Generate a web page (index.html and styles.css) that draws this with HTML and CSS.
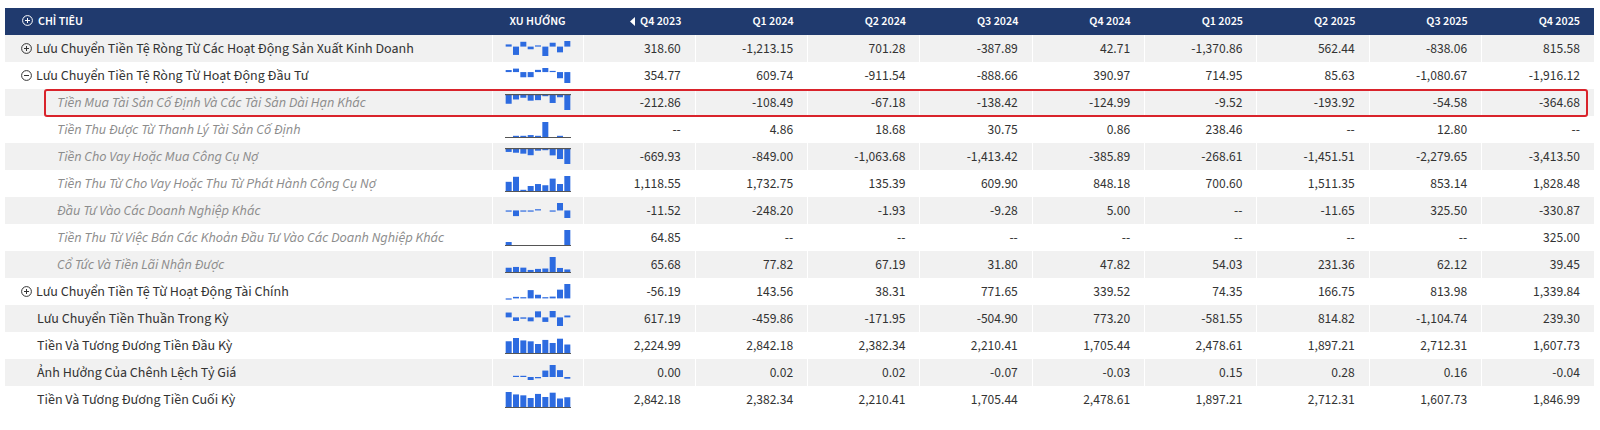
FILE: index.html
```html
<!DOCTYPE html>
<html lang="vi">
<head>
<meta charset="utf-8">
<title>Lưu chuyển tiền tệ</title>
<link rel="stylesheet" href="styles.css">
</head>
<body>
<div class="wrap">
<table class="fin">
  <colgroup>
    <col class="c-name"><col class="c-trend">
    <col class="c-num"><col class="c-num"><col class="c-num"><col class="c-num"><col class="c-num"><col class="c-num"><col class="c-num"><col class="c-num"><col class="c-num">
  </colgroup>
  <thead>
    <tr>
      <th class="h-name"><svg class="ic" width="11" height="11" viewBox="0 0 11 11"><circle cx="5.5" cy="5.5" r="4.9" fill="none" stroke="currentColor" stroke-width="1"/><path d="M3 5.5h5M5.5 3v5" stroke="currentColor" stroke-width="1"/></svg>CHỈ TIÊU</th>
      <th class="h-trend">XU HƯỚNG</th>
      <th><svg class="arrow" width="5" height="9" viewBox="0 0 5 9"><path d="M5 0v9L0 4.5z" fill="currentColor"/></svg>Q4 2023</th>
      <th>Q1 2024</th><th>Q2 2024</th><th>Q3 2024</th><th>Q4 2024</th>
      <th>Q1 2025</th><th>Q2 2025</th><th>Q3 2025</th><th>Q4 2025</th>
    </tr>
  </thead>
  <tbody>
    <tr>
      <td class="name"><svg class="ic" width="11" height="11" viewBox="0 0 11 11"><circle cx="5.5" cy="5.5" r="4.9" fill="none" stroke="currentColor" stroke-width="1"/><path d="M3 5.5h5M5.5 3v5" stroke="currentColor" stroke-width="1"/></svg>Lưu Chuyển Tiền Tệ Ròng Từ Các Hoạt Động Sản Xuất Kinh Doanh</td>
      <td class="spark" data-v="318.60 -1213.15 701.28 -387.89 42.71 -1370.86 562.44 -838.06 815.58"></td>
      <td>318.60</td><td>-1,213.15</td><td>701.28</td><td>-387.89</td><td>42.71</td><td>-1,370.86</td><td>562.44</td><td>-838.06</td><td>815.58</td>
    </tr>
    <tr>
      <td class="name"><svg class="ic" width="11" height="11" viewBox="0 0 11 11"><circle cx="5.5" cy="5.5" r="4.9" fill="none" stroke="currentColor" stroke-width="1"/><path d="M3 5.5h5" stroke="currentColor" stroke-width="1"/></svg>Lưu Chuyển Tiền Tệ Ròng Từ Hoạt Động Đầu Tư</td>
      <td class="spark" data-v="354.77 609.74 -911.54 -888.66 390.97 714.95 85.63 -1080.67 -1916.12"></td>
      <td>354.77</td><td>609.74</td><td>-911.54</td><td>-888.66</td><td>390.97</td><td>714.95</td><td>85.63</td><td>-1,080.67</td><td>-1,916.12</td>
    </tr>
    <tr>
      <td class="name child"><span class="highlight"></span>Tiền Mua Tài Sản Cố Định Và Các Tài Sản Dài Hạn Khác</td>
      <td class="spark" data-v="-212.86 -108.49 -67.18 -138.42 -124.99 -9.52 -193.92 -54.58 -364.68"></td>
      <td>-212.86</td><td>-108.49</td><td>-67.18</td><td>-138.42</td><td>-124.99</td><td>-9.52</td><td>-193.92</td><td>-54.58</td><td>-364.68</td>
    </tr>
    <tr>
      <td class="name child">Tiền Thu Được Từ Thanh Lý Tài Sản Cố Định</td>
      <td class="spark" data-v="- 4.86 18.68 30.75 0.86 238.46 - 12.80 -"></td>
      <td>--</td><td>4.86</td><td>18.68</td><td>30.75</td><td>0.86</td><td>238.46</td><td>--</td><td>12.80</td><td>--</td>
    </tr>
    <tr>
      <td class="name child">Tiền Cho Vay Hoặc Mua Công Cụ Nợ</td>
      <td class="spark" data-v="-669.93 -849.00 -1063.68 -1413.42 -385.89 -268.61 -1451.51 -2279.65 -3413.50"></td>
      <td>-669.93</td><td>-849.00</td><td>-1,063.68</td><td>-1,413.42</td><td>-385.89</td><td>-268.61</td><td>-1,451.51</td><td>-2,279.65</td><td>-3,413.50</td>
    </tr>
    <tr>
      <td class="name child">Tiền Thu Từ Cho Vay Hoặc Thu Từ Phát Hành Công Cụ Nợ</td>
      <td class="spark" data-v="1118.55 1732.75 135.39 609.90 848.18 700.60 1511.35 853.14 1828.48"></td>
      <td>1,118.55</td><td>1,732.75</td><td>135.39</td><td>609.90</td><td>848.18</td><td>700.60</td><td>1,511.35</td><td>853.14</td><td>1,828.48</td>
    </tr>
    <tr>
      <td class="name child">Đầu Tư Vào Các Doanh Nghiệp Khác</td>
      <td class="spark" data-v="-11.52 -248.20 -1.93 -9.28 5.00 - -11.65 325.50 -330.87"></td>
      <td>-11.52</td><td>-248.20</td><td>-1.93</td><td>-9.28</td><td>5.00</td><td>--</td><td>-11.65</td><td>325.50</td><td>-330.87</td>
    </tr>
    <tr>
      <td class="name child">Tiền Thu Từ Việc Bán Các Khoản Đầu Tư Vào Các Doanh Nghiệp Khác</td>
      <td class="spark" data-v="64.85 - - - - - - - 325.00"></td>
      <td>64.85</td><td>--</td><td>--</td><td>--</td><td>--</td><td>--</td><td>--</td><td>--</td><td>325.00</td>
    </tr>
    <tr>
      <td class="name child">Cổ Tức Và Tiền Lãi Nhận Được</td>
      <td class="spark" data-v="65.68 77.82 67.19 31.80 47.82 54.03 231.36 62.12 39.45"></td>
      <td>65.68</td><td>77.82</td><td>67.19</td><td>31.80</td><td>47.82</td><td>54.03</td><td>231.36</td><td>62.12</td><td>39.45</td>
    </tr>
    <tr>
      <td class="name"><svg class="ic" width="11" height="11" viewBox="0 0 11 11"><circle cx="5.5" cy="5.5" r="4.9" fill="none" stroke="currentColor" stroke-width="1"/><path d="M3 5.5h5M5.5 3v5" stroke="currentColor" stroke-width="1"/></svg>Lưu Chuyển Tiền Tệ Từ Hoạt Động Tài Chính</td>
      <td class="spark" data-v="-56.19 143.56 38.31 771.65 339.52 74.35 166.75 813.98 1339.84"></td>
      <td>-56.19</td><td>143.56</td><td>38.31</td><td>771.65</td><td>339.52</td><td>74.35</td><td>166.75</td><td>813.98</td><td>1,339.84</td>
    </tr>
    <tr>
      <td class="name plain">Lưu Chuyển Tiền Thuần Trong Kỳ</td>
      <td class="spark" data-v="617.19 -459.86 -171.95 -504.90 773.20 -581.55 814.82 -1104.74 239.30"></td>
      <td>617.19</td><td>-459.86</td><td>-171.95</td><td>-504.90</td><td>773.20</td><td>-581.55</td><td>814.82</td><td>-1,104.74</td><td>239.30</td>
    </tr>
    <tr>
      <td class="name plain">Tiền Và Tương Đương Tiền Đầu Kỳ</td>
      <td class="spark" data-v="2224.99 2842.18 2382.34 2210.41 1705.44 2478.61 1897.21 2712.31 1607.73"></td>
      <td>2,224.99</td><td>2,842.18</td><td>2,382.34</td><td>2,210.41</td><td>1,705.44</td><td>2,478.61</td><td>1,897.21</td><td>2,712.31</td><td>1,607.73</td>
    </tr>
    <tr>
      <td class="name plain">Ảnh Hưởng Của Chênh Lệch Tỷ Giá</td>
      <td class="spark" data-v="0.00 0.02 0.02 -0.07 -0.03 0.15 0.28 0.16 -0.04"></td>
      <td>0.00</td><td>0.02</td><td>0.02</td><td>-0.07</td><td>-0.03</td><td>0.15</td><td>0.28</td><td>0.16</td><td>-0.04</td>
    </tr>
    <tr>
      <td class="name plain">Tiền Và Tương Đương Tiền Cuối Kỳ</td>
      <td class="spark" data-v="2842.18 2382.34 2210.41 1705.44 2478.61 1897.21 2712.31 1607.73 1846.99"></td>
      <td>2,842.18</td><td>2,382.34</td><td>2,210.41</td><td>1,705.44</td><td>2,478.61</td><td>1,897.21</td><td>2,712.31</td><td>1,607.73</td><td>1,846.99</td>
    </tr>
  </tbody>
</table>
</div>
<script src="script.js"></script>
</body>
</html>
```

FILE: styles.css
```css
html, body {
  margin: 0;
  background: #ffffff;
}
body {
  font-family: "Source Sans 3", Lato, "Noto Sans", sans-serif;
  color: #333333;
}
.wrap {
  padding: 8px 6px 0 5px;
}
.fin {
  width: 1589px;
  border-collapse: collapse;
  table-layout: fixed;
}
.c-name { width: 487px; }
.c-trend { width: 91px; }
.c-num { width: 112.33px; }

.fin th {
  height: 27px;
  padding: 0 14px 0 0;
  background: #203a6e;
  color: #ffffff;
  font-size: 12px;
  font-weight: 600;
  text-align: right;
  white-space: nowrap;
}
.fin th.h-name {
  text-align: left;
  padding-left: 17px;
}
.fin th.h-trend {
  text-align: center;
  padding: 0;
}
.arrow {
  margin-right: 5px;
  vertical-align: -1px;
}
.ic {
  margin-right: 4px;
  vertical-align: -1px;
}
.fin th .ic {
  margin-right: 5px;
}

.fin td {
  height: 27px;
  padding: 0 14px 0 0;
  font-size: 13.5px;
  text-align: right;
  white-space: nowrap;
  border-left: 1px solid #ffffff;
}
.fin tbody tr:nth-child(odd) td {
  background: #f1f1f1;
}
.fin td.name {
  position: relative;
  text-align: left;
  padding-left: 16px;
  border-left: none;
  font-size: 14px;
  color: #333333;
}
.fin td.plain {
  padding-left: 32px;
}
.fin td.child {
  padding-left: 52px;
  font-style: italic;
  color: #8c8c8c;
}
.fin td.spark {
  padding: 0;
  text-align: center;
  line-height: 0;
}
.fin td.spark svg {
  vertical-align: middle;
}
.highlight {
  position: absolute;
  left: 39px;
  top: 0;
  width: 1544px;
  height: 28px;
  box-sizing: border-box;
  border: 2px solid #d9232b;
  border-radius: 3px;
  pointer-events: none;
  z-index: 2;
}
```

FILE: script.js
```js
(function () {
  var NS = 'http://www.w3.org/2000/svg';
  var cells = document.querySelectorAll('.spark');
  Array.prototype.forEach.call(cells, function (cell) {
    var vals = cell.getAttribute('data-v').split(' ').map(function (s) {
      return s === '-' ? null : parseFloat(s);
    });
    var W = 66, H = 15, top = 1, n = vals.length, pitch = W / n, bw = 6;
    var nums = vals.filter(function (v) { return v !== null; });
    var max = Math.max.apply(null, nums.concat([0]));
    var min = Math.min.apply(null, nums.concat([0]));
    var range = (max - min) || 1;
    var zeroY = top + H * max / range;
    var svg = document.createElementNS(NS, 'svg');
    svg.setAttribute('width', W);
    svg.setAttribute('height', H + 2);
    svg.setAttribute('viewBox', '0 0 ' + W + ' ' + (H + 2));
    vals.forEach(function (v, i) {
      if (v === null || v === 0) return;
      var h = Math.abs(v) / range * H;
      if (h < 1.2) h = 1.2;
      var y = v > 0 ? zeroY - h : zeroY;
      var r = document.createElementNS(NS, 'rect');
      r.setAttribute('x', (i * pitch + (pitch - bw) / 2).toFixed(2));
      r.setAttribute('y', y.toFixed(2));
      r.setAttribute('width', bw);
      r.setAttribute('height', h.toFixed(2));
      r.setAttribute('fill', '#2d6be0');
      svg.appendChild(r);
    });
    if (min >= 0 || max <= 0) {
      var l = document.createElementNS(NS, 'rect');
      l.setAttribute('x', 0);
      l.setAttribute('y', (max <= 0 ? zeroY - 1 : zeroY).toFixed(2));
      l.setAttribute('width', W);
      l.setAttribute('height', 1.2);
      l.setAttribute('fill', '#555555');
      svg.appendChild(l);
    }
    cell.appendChild(svg);
  });
})();
```
